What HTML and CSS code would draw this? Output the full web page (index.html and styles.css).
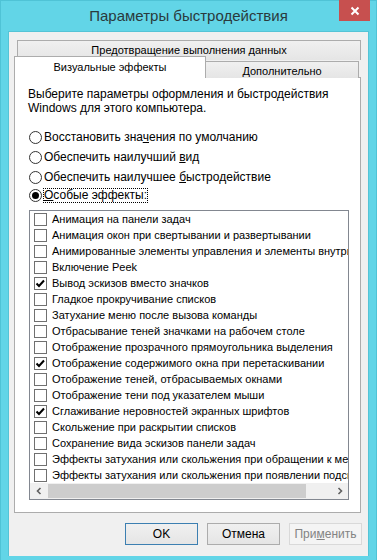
FILE: index.html
```html
<!DOCTYPE html>
<html>
<head>
    <title>Параметры быстродействия</title>
    <link rel="stylesheet" href="styles.css">
</head>
<body>
    <div class="window">
        <div class="titlebar">
            <span></span>
            <h1 class="title">Параметры быстродействия</h1>
            <button class="close-btn">
                <svg width="10" height="10" viewBox="0 0 10 10"><path d="M1.5 1.5 L8.5 8.5 M8.5 1.5 L1.5 8.5" stroke="#fff" stroke-width="2"/></svg>
            </button>
        </div>

        <div class="client">
            <div class="tabs">
                <div class="tab-row back">
                    <div class="tab wide">Предотвращение выполнения данных</div>
                </div>
                <div class="tab-row front">
                    <div class="tab active">Визуальные эффекты</div>
                    <div class="tab other">Дополнительно</div>
                </div>
            </div>

            <div class="panel">
                <p class="intro">Выберите параметры оформления и быстродействия<br>Windows для этого компьютера.</p>

                <div class="radios">
                    <div class="radio-row"><span class="radio"></span><span>Восстановить зна<u>ч</u>ения по умолчанию</span></div>
                    <div class="radio-row"><span class="radio"></span><span>Обеспечить наилучший <u>в</u>ид</span></div>
                    <div class="radio-row"><span class="radio"></span><span>Обеспечить наилучшее <u>б</u>ыстродействие</span></div>
                    <div class="radio-row"><span class="radio checked"></span><span class="focused"><u>О</u>собые эффекты:</span></div>
                </div>

                <div class="listbox">
                    <ul class="items">
                        <li><span class="check"></span>Анимация на панели задач</li>
                        <li><span class="check"></span>Анимация окон при свертывании и развертывании</li>
                        <li><span class="check"></span>Анимированные элементы управления и элементы внутри окна</li>
                        <li><span class="check"></span>Включение Peek</li>
                        <li><span class="check on"><svg width="11" height="11" viewBox="0 0 11 11"><path d="M1.5 5.5 L4 8 L9 2.5" fill="none" stroke="#000" stroke-width="2"/></svg></span>Вывод эскизов вместо значков</li>
                        <li><span class="check"></span>Гладкое прокручивание списков</li>
                        <li><span class="check"></span>Затухание меню после вызова команды</li>
                        <li><span class="check"></span>Отбрасывание теней значками на рабочем столе</li>
                        <li><span class="check"></span>Отображение прозрачного прямоугольника выделения</li>
                        <li><span class="check on"><svg width="11" height="11" viewBox="0 0 11 11"><path d="M1.5 5.5 L4 8 L9 2.5" fill="none" stroke="#000" stroke-width="2"/></svg></span>Отображение содержимого окна при перетаскивании</li>
                        <li><span class="check"></span>Отображение теней, отбрасываемых окнами</li>
                        <li><span class="check"></span>Отображение тени под указателем мыши</li>
                        <li><span class="check on"><svg width="11" height="11" viewBox="0 0 11 11"><path d="M1.5 5.5 L4 8 L9 2.5" fill="none" stroke="#000" stroke-width="2"/></svg></span>Сглаживание неровностей экранных шрифтов</li>
                        <li><span class="check"></span>Скольжение при раскрытии списков</li>
                        <li><span class="check"></span>Сохранение вида эскизов панели задач</li>
                        <li><span class="check"></span>Эффекты затухания или скольжения при обращении к меню</li>
                        <li><span class="check"></span>Эффекты затухания или скольжения при появлении подсказок</li>
                    </ul>
                    <div class="hscroll">
                        <span class="arrow"><svg width="6" height="8" viewBox="0 0 6 8"><path d="M4.5 1 L1.5 4 L4.5 7" fill="none" stroke="#606060" stroke-width="1.6"/></svg></span>
                        <div class="track"><div class="thumb"></div></div>
                        <span class="arrow"><svg width="6" height="8" viewBox="0 0 6 8"><path d="M1.5 1 L4.5 4 L1.5 7" fill="none" stroke="#606060" stroke-width="1.6"/></svg></span>
                    </div>
                </div>
            </div>

            <div class="buttons">
                <button class="btn default">OK</button>
                <button class="btn">Отмена</button>
                <button class="btn disabled">При<u>м</u>енить</button>
            </div>
        </div>
    </div>
</body>
</html>
```

FILE: styles.css
```css
body {
    margin: 0;
    font-family: "Liberation Sans", Arial, sans-serif;
    font-size: 12px;
    color: #000;
}
.window {
    width: 377px;
    height: 560px;
    box-sizing: border-box;
    background-color: #62d5e7;
    border: 1px solid #4fc3d6;
    border-bottom: none;
}
.titlebar {
    height: 30px;
    display: grid;
    grid-template-columns: 1fr auto 1fr;
}
.title {
    margin: 0;
    padding-top: 6px;
    font-size: 15px;
    font-weight: normal;
    color: #2a3a3d;
}
.close-btn {
    justify-self: end;
    width: 31px;
    height: 21px;
    margin: -1px 6px 0 0;
    padding: 0;
    border: none;
    background-color: #c7504f;
    display: flex;
    align-items: center;
    justify-content: center;
}
.client {
    margin: 0 7px;
    height: 525px;
    box-sizing: border-box;
    background-color: #f0f0f0;
    border: 1px solid #55c4d6;
    border-bottom: none;
    padding: 8px 7px 0 5px;
}
.tab-row {
    display: flex;
}
.tab {
    box-sizing: border-box;
    border: 1px solid #acacac;
    border-bottom: none;
    background: linear-gradient(#f0f0f0, #e5e5e5);
    display: flex;
    align-items: center;
    justify-content: center;
    font-size: 11px;
}
.tab-row.back {
    height: 20px;
    margin-left: 3px;
}
.tab.wide {
    flex: 1;
    padding-bottom: 2px;
}
.tab-row.front {
    height: 22px;
    margin-top: -4px;
    margin-bottom: -1px;
    align-items: flex-end;
}
.tab.active {
    width: 192px;
    height: 22px;
    background: #fff;
    position: relative;
    z-index: 1;
    padding-bottom: 2px;
}
.tab.other {
    width: 154px;
    height: 17px;
    margin-left: -1px;
    padding-top: 1px;
}
.panel {
    height: 436px;
    box-sizing: border-box;
    background-color: #fff;
    border: 1px solid #acacac;
    padding: 9px 13px 0 13px;
}
.intro {
    margin: 0 0 12px 0;
    line-height: 14px;
}
.radio-row {
    height: 20px;
    display: flex;
    align-items: center;
    gap: 2px;
    margin-left: 1px;
}
.radio-row:last-child {
    height: 17px;
}
.radio {
    width: 13px;
    height: 13px;
    box-sizing: border-box;
    border: 1px solid #333;
    border-radius: 50%;
    background: #fff;
    display: flex;
    align-items: center;
    justify-content: center;
}
.radio.checked::after {
    content: "";
    width: 7px;
    height: 7px;
    border-radius: 50%;
    background: #000;
}
.focused {
    outline: 1px dotted #000;
    line-height: 13px;
}
.listbox {
    margin: 6px 0 0 1px;
    width: 320px;
    height: 290px;
    box-sizing: border-box;
    border: 1px solid #828790;
    display: flex;
    flex-direction: column;
    overflow: hidden;
}
.items {
    list-style: none;
    margin: 0;
    padding: 0;
    flex: 1;
    font-size: 11px;
}
.items li {
    height: 16px;
    display: flex;
    align-items: center;
    gap: 5px;
    padding-left: 4px;
    white-space: nowrap;
}
.check {
    flex: none;
    width: 13px;
    height: 13px;
    box-sizing: border-box;
    border: 1px solid #707070;
    background: #fff;
    display: flex;
    align-items: center;
    justify-content: center;
}
.hscroll {
    height: 17px;
    display: flex;
    background-color: #f0f0f0;
}
.arrow {
    width: 17px;
    display: flex;
    align-items: center;
    justify-content: center;
}
.track {
    flex: 1;
    display: flex;
    align-items: stretch;
    padding: 1px 0;
}
.thumb {
    width: 258px;
    margin-left: 1px;
    background-color: #cdcdcd;
}
.buttons {
    display: flex;
    justify-content: flex-end;
    gap: 9px;
    margin: 10px -1px 0 0;
}
.btn {
    width: 73px;
    height: 22px;
    padding: 0;
    font-family: inherit;
    font-size: 12px;
    color: #000;
    background: linear-gradient(#f0f0f0, #e5e5e5);
    border: 1px solid #acacac;
}
.btn.default {
    border-color: #3c7fb1;
}
.btn.disabled {
    color: #838383;
    background: #f4f4f4;
    border-color: #d9d9d9;
}
```
